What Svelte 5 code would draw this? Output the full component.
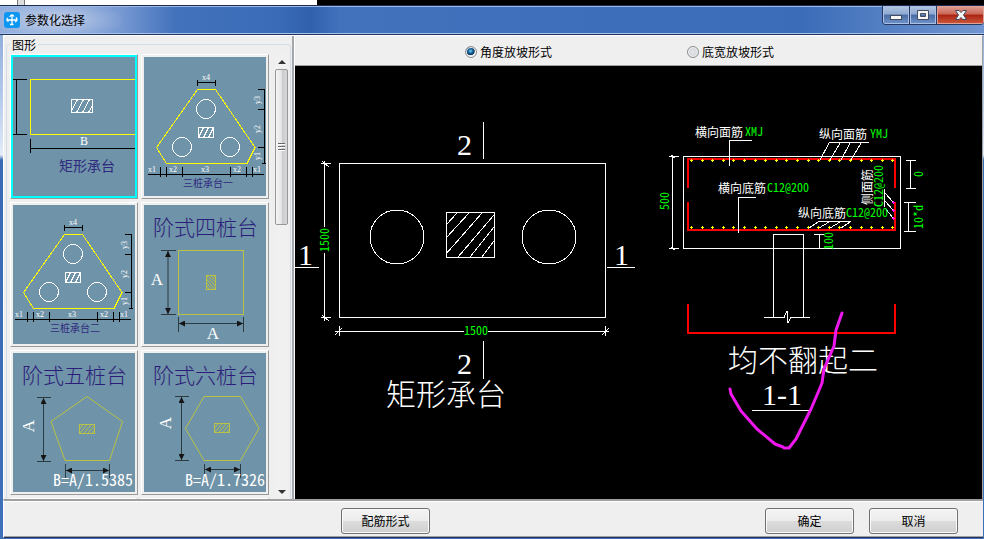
<script lang="ts">
  let slope = $state('angle')
  let selected = $state(0)

  const DOTS = Array.from({ length: 20 }, (_, i) => Math.round(691 + i * 10.6) + 0.5)
  const MARKS = [202.5, 210.5, 218.5]

  // parallel slanted strokes clipped to a w x h box
  function hatch(x: number, y: number, w: number, h: number, step: number, run: number, flip = false) {
    let d = ''
    for (let c = step; c < w + run; c += step) {
      const t0 = Math.max(0, (run - c) / run)
      const t1 = Math.min(1, (w - c + run) / run)
      const px = (t: number) => {
        const v = c - run + run * t
        return (x + (flip ? w - v : v)).toFixed(1)
      }
      d += `M${px(t0)} ${(y + h - h * t0).toFixed(1)}L${px(t1)} ${(y + h - h * t1).toFixed(1)}`
    }
    return d
  }
</script>

{#snippet hatchBox(x: number, y: number, w: number, h: number, step: number, run: number, flip = false)}
  <rect {x} {y} width={w} height={h} />
  <path d={hatch(x, y, w, h, step, run, flip)} />
{/snippet}

{#snippet rectCap()}
  <path class="k" d="M0 22.5H14M0 77.5H14M3.5 22V78M17.5 82V96M17.5 91.5H122" />
  <path class="y" d="M123 22.5H17.5V77.5H123" />
  <g class="w">{@render hatchBox(58.5, 42.5, 21, 13, 6, 7)}</g>
  <text class="tag big" x="71" y="88">B</text>
  <text class="name" x="46" y="114">矩形承台</text>
{/snippet}

{#snippet triCap(caption: string)}
  <path class="k" d="M53.5 25.5H71.5M53.5 23V29M71.5 23V29M120.5 32V107M114 32.5H121M114 52.5H121M114 90.5H121M118 106.5H122" />
  <path class="k" d="M4 117.5H120M16.5 110V120M22.5 110V120M38.5 110V120M86.5 110V120M102.5 110V120M108.5 110V120" />
  <path class="y" d="M53.5 32.5H71.5L111 90.5L103 106.5H22.5L12.5 90.5Z" />
  <g class="w">
    <circle cx="62" cy="52" r="9.5" />
    <circle cx="38" cy="90" r="9.5" />
    <circle cx="86" cy="90" r="9.5" />
    {@render hatchBox(54.5, 70.5, 15, 10, 5, 5)}
  </g>
  <text class="tag" x="62" y="23">x4</text>
  <text class="tag" x="8" y="115">x1</text>
  <text class="tag" x="29" y="115">x2</text>
  <text class="tag" x="61" y="115">x3</text>
  <text class="tag" x="93" y="115">x2</text>
  <text class="tag" x="113" y="115">x1</text>
  <text class="tag" transform="translate(116 43) rotate(-90)">y3</text>
  <text class="tag" transform="translate(116 72) rotate(-90)">y2</text>
  <text class="tag" transform="translate(116 99) rotate(-90)">y1</text>
  <text class="name small" x="39" y="130">{caption}</text>
{/snippet}

{#snippet fourCap()}
  <text class="title" x="9" y="30">阶式四桩台</text>
  <path class="d" d="M17 45.5H32M17 109.5H32M34.5 112V127M99.5 112V127" />
  <path class="d arrows" d="M24 46V109" />
  <path class="d arrows" d="M35 118.5H99" />
  <g class="o">
    <rect x="34.5" y="45.5" width="65" height="64" />
    {@render hatchBox(62.5, 70.5, 9, 14, 3, 12, true)}
  </g>
  <text class="letter" x="13" y="80">A</text>
  <text class="letter" x="69" y="134">A</text>
{/snippet}

{#snippet fiveCap()}
  <text class="title" x="9" y="30">阶式五桩台</text>
  <path class="d" d="M24 44.5H38M24 108.5H38M52.5 111V125M96.5 111V125" />
  <path class="d arrows" d="M30.5 45V108" />
  <path class="d arrows" d="M53 117.5H96" />
  <g class="o">
    <path d="M74 43.5L109.5 68.5L96.5 107.5H52L38 68.5Z" />
    {@render hatchBox(66.5, 71.5, 15, 9, 4, 8)}
  </g>
  <text class="letter" transform="translate(21 73) rotate(-90)">A</text>
  <text class="ratio" x="40" y="133">B=A/1.5385</text>
{/snippet}

{#snippet sixCap()}
  <text class="title" x="9" y="30">阶式六桩台</text>
  <path class="d" d="M31 43.5H45M31 107.5H45M60.5 111V125M96.5 111V125" />
  <path class="d arrows" d="M37.5 44V107" />
  <path class="d arrows" d="M61 116.5H96" />
  <g class="o">
    <path d="M60 43.5H96.5L115 75.5L96.5 107.5H60L41.5 75.5Z" />
    {@render hatchBox(70.5, 70.5, 15, 9, 4, 8)}
  </g>
  <text class="letter" transform="translate(27 70) rotate(-90)">A</text>
  <text class="ratio" x="41" y="133">B=A/1.7326</text>
{/snippet}

<svg class="defs" width="0" height="0" aria-hidden="true">
  <marker id="arrow" viewBox="0 0 6 6" refX="6" refY="3" markerWidth="6" markerHeight="6" orient="auto-start-reverse">
    <path d="M0 0L6 3L0 6Z" fill="#151515" />
  </marker>
</svg>

<div class="screen">
  <div class="behind"><span></span></div>
  <div class="window">
    <header>
      <svg class="logo" viewBox="0 0 16 16">
        <rect width="16" height="16" rx="3" fill="#0d97f2" />
        <path d="M6 5V4.500Q8 1.500 10 4.500M8 3V12.500M6 12.500H9.500M4 6Q1.500 8 4.500 9.500M3 8H13.500M12 5.500Q14.500 8.500 11 10" fill="none" stroke="#fff" stroke-width="1.300" />
      </svg>
      <h1>参数化选择</h1>
      <div class="controls">
        <button aria-label="最小化"><svg viewBox="0 0 14 12"><rect x="1.500" y="6.500" width="11" height="4" /></svg></button>
        <button aria-label="最大化"><svg viewBox="0 0 14 12"><path fill-rule="evenodd" d="M1.500 1.500H12.500V10.500H1.500ZM4.500 4.500V7.500H9.500V4.500Z" /></svg></button>
        <button class="close" aria-label="关闭"><svg viewBox="0 0 14 12"><path d="M1.500 1.500H5L7 3.500L9 1.500H12.500L9.500 6L12.500 10.500H9L7 8.500L5 10.500H1.500L4.500 6Z" /></svg></button>
      </div>
    </header>

    <main>
      <aside>
        <fieldset>
          <legend>图形</legend>
          <div class="shelf">
            <div class="thumbs">
              {#each [0, 1, 2, 3, 4, 5, 6, 7] as i}
                <button class="thumb" class:selected={selected === i} onclick={() => (selected = i)} aria-label="图形 {i + 1}">
                  <svg viewBox="0 0 122 139">
                    {#if i === 0}
                      {@render rectCap()}
                    {:else if i === 1}
                      {@render triCap('三桩承台一')}
                    {:else if i === 2}
                      <g transform="translate(-2 -3)">{@render triCap('三桩承台二')}</g>
                    {:else if i === 3}
                      {@render fourCap()}
                    {:else if i === 4}
                      {@render fiveCap()}
                    {:else if i === 5}
                      {@render sixCap()}
                    {/if}
                  </svg>
                </button>
              {/each}
            </div>
            <div class="scroll">
              <button aria-label="向上"><svg viewBox="0 0 8 4"><path d="M0 4L4 0L8 4Z" /></svg></button>
              <div class="grip"><i></i><i></i><i></i></div>
              <button class="down" aria-label="向下"><svg viewBox="0 0 8 4"><path d="M0 0L4 4L8 0Z" /></svg></button>
            </div>
          </div>
        </fieldset>
      </aside>

      <section>
        <div class="modes">
          <label><input type="radio" name="slope" value="angle" bind:group={slope} />角度放坡形式</label>
          <label><input type="radio" name="slope" value="width" bind:group={slope} />底宽放坡形式</label>
        </div>

        <svg class="cad" viewBox="295 66 687 433">
          <!-- plan -->
          <g class="w">
            <rect x="339.5" y="163.5" width="266" height="154" />
            <circle cx="397" cy="237" r="27" />
            <circle cx="549" cy="237" r="27" />
            <rect x="446.5" y="212.5" width="48" height="45" />
            <path d="M446 225L457 213M446 238L469 213M446 254L482 213M458 257L494 215M470 257L494 227M482 257L494 241" />
            <path d="M324.5 161V227M324.5 253V321M321 163.5H331M321 317.5H331M322 161L329 167M322 315L329 321" />
            <path d="M335 331.5H464M488 331.5H609M339.5 326V336M605.5 326V336M335 335L342 328M602 335L609 328" />
            <path d="M483.5 122V159M483.5 341V379M295 267.5H319M607 267.5H635" />
          </g>
          <text class="num" x="457" y="155">2</text>
          <text class="num" x="457" y="374">2</text>
          <text class="num" x="298" y="265">1</text>
          <text class="num" x="614" y="265">1</text>
          <text class="val mid" transform="translate(329 240) rotate(-90)">1500</text>
          <text class="val mid" x="476" y="335">1500</text>
          <text class="head" x="386" y="405">矩形承台</text>

          <!-- section 1-1 -->
          <g class="w">
            <rect x="683.5" y="156.5" width="217" height="92" />
            <path d="M773.5 317V234.5H803.5V317M764 317.5H784L787 311L788 323L791 317.5H810" />
            <path d="M672.5 156V249M669 156.5H679M669 248.5H679M671 155L675 158M671 247L675 250" />
            <path d="M910.5 160V189M906 160.5H916M906 188.5H916M908.5 202V232M904 202.5H916M904 231.5H916" />
            <path d="M819.5 234V249M814 234.5H824M814 248.5H824M752 410.5H810" />
          </g>
          <path class="r" d="M688 188V159H895V188M688 202V230H895V202M688 304V333H895V304" />
          {#each DOTS as x}
            <path class="dot" d="M{x - 1.5} 160.5H{x + 1.5}M{x} 159V162M{x - 1.5} 227.5H{x + 1.5}M{x} 226V229" />
          {/each}
          <g class="w">
            <path d="M729.5 166V140.5H752M738.5 233V197.5H756" />
            <path d="M829 142.5H869M829 143L820 160M840 143L830 160M850 143L841 160M861 143L851 160" />
            <path d="M818 221.5H851M818 222L809 228M829 222L819 228M840 222L830 228M850 222L841 228" />
            <path d="M884.5 189V207M885 193L893 202M885 201L893 210M885 208L893 218" />
          </g>
          {#each MARKS as y}
            <path class="mark" d="M892 {y}H895M893.5 {y - 1.5}V{y + 1.5}" />
          {/each}
          <text class="lab" x="695" y="137">横向面筋</text>
          <text class="val" x="745" y="136">XMJ</text>
          <text class="lab" x="819" y="139">纵向面筋</text>
          <text class="val" x="870" y="138">YMJ</text>
          <text class="lab" x="718" y="193">横向底筋</text>
          <text class="val" x="767" y="192">C12@200</text>
          <text class="lab" x="798" y="218">纵向底筋</text>
          <text class="val" x="846" y="217">C12@200</text>
          <text class="lab mid" transform="translate(872 187) rotate(-90)">侧面筋</text>
          <text class="val mid" transform="translate(883 186) rotate(-90)">C12@200</text>
          <text class="val mid" transform="translate(669 201) rotate(-90)">500</text>
          <text class="val mid" transform="translate(923 174) rotate(-90)">0</text>
          <text class="val mid" transform="translate(923 217) rotate(-90)">10*d</text>
          <text class="val mid" transform="translate(833 241) rotate(-90)">100</text>
          <text class="head" x="728" y="371">均不翻起二</text>
          <text class="num mid" x="782" y="405">1-1</text>
          <path class="pen" d="M730 389L731 394L741 411L757 429L775 444L783 447L784 448H789L796 439L805 421L811 409L817 395L822 383L824 369L834 346L836 330L842 313" />
        </svg>
      </section>
    </main>

    <footer>
      <button class="rebar">配筋形式</button>
      <button>确定</button>
      <button>取消</button>
    </footer>
  </div>
</div>

<style>
  :global(body) { margin: 0; background: #efefef; }
  * { box-sizing: border-box; }
  button { font: inherit; color: inherit; padding: 0; }
  .defs { position: absolute; }

  .screen {
    height: 100vh; display: flex; flex-direction: column; overflow: hidden;
    font: 12px/14px "Noto Sans CJK SC", sans-serif; color: #000;
  }
  .behind { height: 5px; flex: none; background: #000; }
  .behind span {
    display: block; width: 317px; height: 5px;
    background: linear-gradient(90deg, #fff 17px, #777 17px 18px, #ddd 18px 24px, #777 24px 25px, #fff 25px);
  }

  .window {
    flex: 1; min-height: 0; display: flex; flex-direction: column;
    padding: 0 1px 1px 3px;
    background: linear-gradient(#7fa2d6, #b9cdec 100px, #e4ecf8 150px, #3a6ab4 155px, #3f6fb8);
  }
  header {
    height: 30px; flex: none; display: flex; align-items: center; gap: 5px;
    margin: 0 -1px 0 -3px; padding-left: 4px;
    border-top: 1px solid #1b2c50; border-bottom: 1px solid #1f3560;
    box-shadow: inset 0 1px #9db9e4, inset 0 -1px #a9c3ea;
    background:
      radial-gradient(ellipse 70px 22px at 55px 50%, #c3d1e9, transparent),
      linear-gradient(90deg, #8fabdc, #7799d2 120px, #4272bc 175px, #3a6bb6 280px, #3060ac 310px, #4272bc 340px, #3b6cb8 800px, #7095d0);
  }
  .logo { width: 16px; height: 16px; }
  h1 { flex: 1; margin: 0; font-size: 12px; font-weight: 400; }
  .controls {
    align-self: flex-start; display: flex; height: 19px; overflow: hidden;
    border: 1px solid #26385f; border-top: 0; border-right: 0; border-radius: 0 0 4px 4px;
  }
  .controls button {
    width: 27px; border: 0; border-right: 1px solid #26385f;
    display: flex; align-items: center; justify-content: center;
    background: linear-gradient(#b4c6e2, #8ea9d2 45%, #4a6ba3 50%, #6f94cb);
    box-shadow: inset 0 0 0 1px #a9c0e4;
  }
  .controls .close {
    width: 47px; border-right: 0;
    background: linear-gradient(#e0a196, #cc6654 45%, #a92412 50%, #cf5a3c);
    box-shadow: inset 0 0 0 1px #e2a298;
  }
  .controls svg { width: 14px; height: 12px; fill: #f6f6f6; stroke: #434b60; }

  main {
    flex: 1; min-height: 0; display: flex; background: #efefef;
    border-left: 1px solid #fff; border-top: 1px solid #fff; border-right: 1px solid #a0a0a0;
  }
  aside {
    width: 290px; flex: none; padding-left: 2px; overflow: hidden;
    border-right: 2px solid #a3a7ab;
  }
  fieldset {
    height: 520px; min-width: 0; margin: 0 1px 0 0; padding: 0 2px 0 3px;
    border: 1px solid #d2dde8; border-radius: 3px;
  }
  legend { padding: 0 2px; line-height: 17px; }
  .shelf { display: flex; gap: 6px; padding-top: 1px; }
  .thumbs { display: grid; grid-template-columns: 128px 128px; gap: 3px; }
  .thumb {
    height: 145px; padding: 2px; background: #efefef;
    border: 1px solid; border-color: #fff #999 #999 #fff;
  }
  .thumb svg { display: block; width: 122px; height: 139px; background: #6f93a8; }
  .selected { background: #0ff; }

  .thumb svg, .cad { shape-rendering: crispEdges; }
  .k { fill: none; stroke: #000; }
  .y { fill: none; stroke: #ff0; }
  .w { fill: none; stroke: #fff; }
  .o { fill: none; stroke: #b9c244; shape-rendering: auto; }
  .d { fill: none; stroke: #2c3a42; }
  .arrows { marker-start: url(#arrow); marker-end: url(#arrow); shape-rendering: auto; }
  .tag { font: 8px "Liberation Serif", serif; fill: #fff; text-anchor: middle; }
  .tag.big { font-size: 12px; }
  .name { font: 14px "Noto Sans CJK SC", sans-serif; fill: #2f2a80; }
  .name.small { font-size: 10px; }
  .title { font: 300 21px "Noto Sans CJK SC", sans-serif; fill: #2c1d7a; }
  .letter { font: 17px "Liberation Serif", serif; fill: #fff; text-anchor: middle; }
  .ratio { font: 300 16px "Noto Sans Mono CJK SC", "Liberation Mono", monospace; fill: #fff; }

  .scroll {
    width: 15px; height: 446px; display: flex; flex-direction: column;
    margin-top: -1px; background: #f0f0f0;
  }
  .scroll button { height: 16px; border: 0; background: none; line-height: 0; }
  .scroll svg { width: 8px; height: 4px; fill: #333; }
  .down { margin-top: auto; }
  .grip {
    height: 156px; border: 1px solid #979797; border-radius: 2px;
    display: flex; flex-direction: column; gap: 1px; align-items: center; justify-content: center;
    background: linear-gradient(90deg, #f5f5f5, #e4e4e6 50%, #c9cacd 55%, #d8d8da);
  }
  .grip i { width: 7px; height: 2px; background: #666; border-bottom: 1px solid #fff; }

  section { flex: 1; min-width: 0; display: flex; flex-direction: column; border-left: 1px solid #fff; }
  .modes {
    height: 30px; flex: none; display: flex; align-items: center; justify-content: center;
    gap: 135px; padding: 2px 38px 0 0; border-bottom: 1px solid #a0a0a0;
  }
  label { display: flex; align-items: center; gap: 3px; }
  input {
    appearance: none; width: 12px; height: 12px; margin: 0; border-radius: 50%;
    border: 1px solid #8b8f94; background: radial-gradient(#e2e4e6, #cfd2d5);
    box-shadow: inset 0 0 0 1px #f4f4f4;
  }
  input:checked { background: radial-gradient(circle at 45% 40%, #7fd0f5, #1b6fa8 25%, #0d2f55 48%, #e6e9ec 55%); }
  .cad { flex: 1; min-height: 0; width: 100%; background: #000; }
  .r { fill: none; stroke: #f00; stroke-width: 2; }
  .dot { stroke: #ff0; }
  .mark { stroke: #f0f; }
  .num { font: 30px "Liberation Serif", serif; fill: #fff; }
  .head { font: 300 30px "Noto Sans CJK SC", sans-serif; fill: #fff; }
  .lab { font: 12px "Noto Sans CJK SC", sans-serif; fill: #fff; }
  .val { font: 12px "Noto Sans Mono CJK SC", "Liberation Mono", monospace; fill: #0f0; }
  .mid { text-anchor: middle; }
  .pen { fill: none; stroke: #ee18ee; stroke-width: 3; stroke-linecap: round; stroke-linejoin: round; shape-rendering: auto; }

  footer {
    height: 39px; flex: none; display: flex; align-items: center; gap: 15px;
    padding: 3px 25px 0 337px; background: #efefef;
    border-top: 2px solid #a0a0a0; border-bottom: 1px solid #1f3560;
    border-left: 1px solid #fff; box-shadow: inset 0 1px #fff, inset 0 -1px #a0a0a0;
  }
  footer button {
    width: 89px; height: 26px; border: 1px solid #707070; border-radius: 3px;
    background: linear-gradient(#f4f4f4, #ebebeb 50%, #dcdcdc 50%, #cfcfcf);
    box-shadow: inset 0 0 0 1px #fafafa;
  }
  .rebar { margin-right: auto; }
</style>
